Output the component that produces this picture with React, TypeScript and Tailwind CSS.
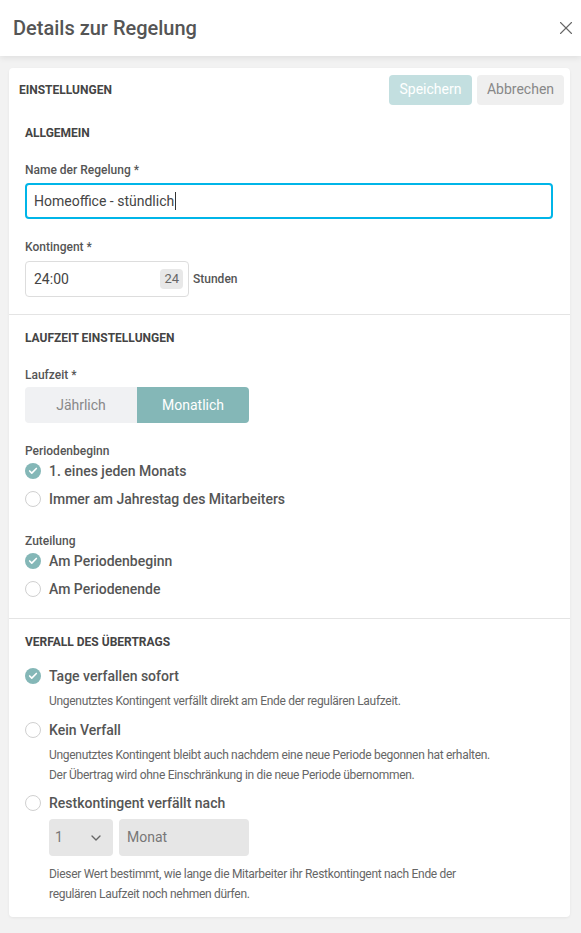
import { Check, ChevronDown, X } from "lucide-react";

function Radio({ checked, label }: { checked?: boolean; label: string }) {
  return (
    <div className="flex h-[24px] items-center gap-2">
      {checked ? (
        <span className="flex h-4 w-4 items-center justify-center rounded-full bg-[#84b7b7]">
          <Check className="h-[10px] w-[10px] text-white" strokeWidth={4} />
        </span>
      ) : (
        <span className="h-4 w-4 rounded-full border-[1.5px] border-[#d0d0d0] bg-white" />
      )}
      <span className="text-[14px] font-medium text-[#555]">{label}</span>
    </div>
  );
}

function Heading({ children }: { children: string }) {
  return <div className="text-[12px] font-bold uppercase leading-4 text-[#444]">{children}</div>;
}

function Label({ children }: { children: string }) {
  return <div className="text-[12px] font-medium leading-4 text-[#555]">{children}</div>;
}

function Hint({ children }: { children: React.ReactNode }) {
  return <p className="ml-[24px] text-[12px] leading-[20px] tracking-[-0.3px] text-[#666]">{children}</p>;
}

export default function App() {
  return (
    <div className="min-h-[933px] bg-[#f2f2f2] font-['Roboto',sans-serif]">
      {/* Header */}
      <header className="relative z-10 flex h-[56px] items-center justify-between bg-white pl-[13px] pr-[4px] shadow-[0_2px_6px_rgba(0,0,0,0.08)]">
        <h1 className="text-[20px] font-medium text-[#555]">Details zur Regelung</h1>
        <X className="h-[22px] w-[22px] text-[#666]" strokeWidth={1.2} />
      </header>

      {/* Card */}
      <div className="ml-[9px] mt-[12px] w-[561px] rounded bg-white shadow-[0_1px_3px_rgba(0,0,0,0.06)]">
        <div className="flex h-[42px] items-center justify-between pl-[10px] pr-[6px] pt-px">
          <Heading>Einstellungen</Heading>
          <div className="flex gap-[5px]">
            <button className="h-[30px] w-[83px] rounded bg-[#c3dfe0] text-[14px] text-white">Speichern</button>
            <button className="h-[30px] w-[87px] rounded bg-[#efefef] text-[14px] text-[#888]">Abbrechen</button>
          </div>
        </div>

        {/* Allgemein */}
        <section className="border-b border-[#e4e4e4] px-4 pb-[17px] pt-[15px]">
          <Heading>Allgemein</Heading>
          <div className="mt-[21px]">
            <Label>Name der Regelung *</Label>
          </div>
          <div className="mt-[5px] flex h-[36px] w-[528px] items-center rounded border-2 border-[#00b5e8] px-[7px] text-[14px] text-[#444]">
            Homeoffice - stündlich<span className="ml-px h-[18px] w-px bg-[#333]" />
          </div>
          <div className="mt-[20px]">
            <Label>Kontingent *</Label>
          </div>
          <div className="mt-[6px] flex items-center gap-[4px]">
            <div className="flex h-[36px] w-[164px] items-center justify-between rounded border border-[#ddd] pl-[8px] pr-[5px] text-[14px] text-[#444]">
              <span>24:00</span>
              <span className="rounded-sm bg-[#e8e8e8] px-[4px] text-[13px] leading-[20px] text-[#666]">24</span>
            </div>
            <span className="text-[12px] font-medium text-[#555]">Stunden</span>
          </div>
        </section>

        {/* Laufzeit */}
        <section className="border-b border-[#e4e4e4] px-4 pb-[17px] pt-[15px]">
          <Heading>Laufzeit Einstellungen</Heading>
          <div className="mt-[21px]">
            <Label>Laufzeit *</Label>
          </div>
          <div className="mt-[4px] flex h-[36px] w-[224px] overflow-hidden rounded text-[14px]">
            <div className="flex flex-1 items-center justify-center bg-[#f0f1f3] text-[#888]">Jährlich</div>
            <div className="flex flex-1 items-center justify-center bg-[#84b7b7] text-white">Monatlich</div>
          </div>
          <div className="mt-[20px]">
            <Label>Periodenbeginn</Label>
          </div>
          <div className="flex flex-col gap-[4px]">
            <Radio checked label="1. eines jeden Monats" />
            <Radio label="Immer am Jahrestag des Mitarbeiters" />
          </div>
          <div className="mt-[22px]">
            <Label>Zuteilung</Label>
          </div>
          <div className="flex flex-col gap-[4px]">
            <Radio checked label="Am Periodenbeginn" />
            <Radio label="Am Periodenende" />
          </div>
        </section>

        {/* Verfall */}
        <section className="px-4 pb-[13px] pt-[15px]">
          <Heading>Verfall des Übertrags</Heading>
          <div className="mt-[14px]">
            <Radio checked label="Tage verfallen sofort" />
            <div className="mt-[3px]">
              <Hint>Ungenutztes Kontingent verfällt direkt am Ende der regulären Laufzeit.</Hint>
            </div>
          </div>
          <div className="mt-[7px]">
            <Radio label="Kein Verfall" />
            <div className="mt-[3px]">
              <Hint>
                Ungenutztes Kontingent bleibt auch nachdem eine neue Periode begonnen hat erhalten.
                <br />
                Der Übertrag wird ohne Einschränkung in die neue Periode übernommen.
              </Hint>
            </div>
          </div>
          <div className="mt-[6px]">
            <Radio label="Restkontingent verfällt nach" />
            <div className="ml-[24px] mt-[4px] flex gap-[6px] text-[14px] text-[#777]">
              <div className="flex h-[37px] w-[64px] items-center justify-between rounded bg-[#e6e6e6] pl-[6px] pr-[9px]">
                <span>1</span>
                <ChevronDown className="h-4 w-4 text-[#666]" strokeWidth={2} />
              </div>
              <div className="flex h-[37px] w-[130px] items-center rounded bg-[#e6e6e6] px-[8px]">Monat</div>
            </div>
            <div className="mt-[8px]">
              <Hint>
                Dieser Wert bestimmt, wie lange die Mitarbeiter ihr Restkontingent nach Ende der
                <br />
                regulären Laufzeit noch nehmen dürfen.
              </Hint>
            </div>
          </div>
        </section>
      </div>
    </div>
  );
}
